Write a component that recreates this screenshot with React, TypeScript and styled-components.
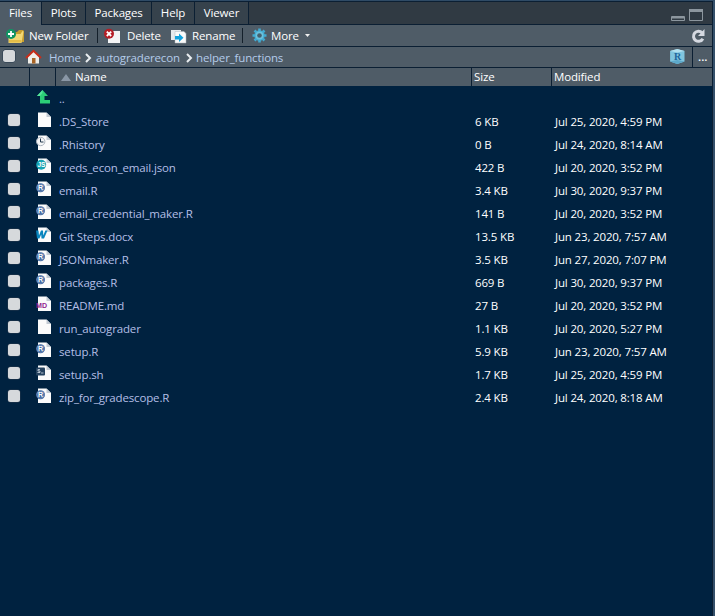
import React from 'react';
import styled, { createGlobalStyle } from 'styled-components';

const Global = createGlobalStyle`
  * { box-sizing: border-box; }
  body { margin: 0; background: #002240; overflow: hidden; }
  svg { display: block; flex: none; }
`;

const line = '#0b1f33';

const Pane = styled.div`
  width: 715px;
  height: 616px;
  display: flex;
  flex-direction: column;
  background: #002240;
  border-top: 1px solid #2f4b66;
  border-right: 2px solid #35506a;
  box-shadow: inset -1px 0 0 ${line};
  color: #fff;
  font: 11.5px/16px "Open Sans", "Noto Sans", sans-serif;
  letter-spacing: -0.15px;
  white-space: nowrap;
`;

const TabBar = styled.div`
  height: 24px;
  margin-right: 1px;
  display: flex;
  background: #303a43;
  border-top: 1px solid ${line};
  box-shadow: inset 0 -1px 0 ${line};
`;

const Tab = styled.div<{ $w: number; $active?: boolean }>`
  width: ${(p) => p.$w}px;
  height: ${(p) => (p.$active ? 23 : 22)}px;
  padding-top: 3px;
  text-align: center;
  background: ${(p) => (p.$active ? '#4f5c67' : '#36424c')};
  border-right: 1px solid ${line};
`;

const WindowButtons = styled.div`
  margin-left: auto;
  padding: 7px 8px 0 0;
`;

const Bar = styled.div<{ $h: number }>`
  height: ${(p) => p.$h}px;
  margin-right: 1px;
  display: flex;
  align-items: center;
  background: #4f5c67;
  border-bottom: 1px solid ${line};
`;

const Slot = styled.div<{ $w: number; $pad?: number; $lift?: number }>`
  width: ${(p) => p.$w}px;
  padding-left: ${(p) => p.$pad ?? 0}px;
  padding-bottom: ${(p) => p.$lift ?? 0}px;
  flex: none;
`;

const Label = styled.span<{ $w: number }>`
  width: ${(p) => p.$w}px;
  flex: none;
`;

const Divider = styled.div`
  width: 1px;
  height: 15px;
  background: #14202b;
  flex: none;
`;

const Crumb = styled(Label)`
  padding-top: 2px;
  color: #b4cbea;
`;

const Check = styled.span`
  display: block;
  width: 12px;
  height: 12px;
  border-radius: 2.5px;
  background: #d6d9dc;
  box-shadow: 0 0 0 0.5px #26394d;
`;

const Ellipsis = styled.div`
  width: 20px;
  height: 20px;
  margin-left: 7px;
  padding: 2px 0 0 5px;
  border-left: 1px solid ${line};
  letter-spacing: 0;
  font-weight: 600;
`;

const Push = styled.div<{ $right: number }>`
  margin-left: auto;
  padding-right: ${(p) => p.$right}px;
`;

const HeaderCell = styled.div<{ $w?: number; $pad: number }>`
  width: ${(p) => (p.$w ? `${p.$w}px` : 'auto')};
  height: 18px;
  flex: none;
  display: flex;
  align-items: center;
  gap: 4px;
  padding-left: ${(p) => p.$pad}px;
  border-right: ${(p) => (p.$w ? `1px solid ${line}` : '0')};
`;

const HeaderRow = styled(Bar)`
  border-bottom-color: #002240;
`;

const Row = styled.div`
  height: 23px;
  display: grid;
  grid-template-columns: 36px 23px 416px 80px 1fr;
`;

const BoxCell = styled.div`
  padding: 4px 0 0 8px;
`;

const IconCell = styled.div`
  padding-top: 1px;
`;

const Name = styled.div`
  padding-top: 4px;
  color: #b4bfe6;
`;

const Cell = styled.div`
  padding-top: 4px;
`;

const Listing = styled.div`
  display: flex;
  flex-direction: column;
`;

type Kind = 'up' | 'file' | 'hist' | 'js' | 'r' | 'doc' | 'md' | 'sh';

const Badge = styled.text`
  font-family: "Liberation Sans", sans-serif;
  font-weight: 700;
  letter-spacing: 0;
`;

const SerifBadge = styled(Badge)`
  font-family: "Liberation Serif", serif;
`;

const FileIcon = ({ kind }: { kind: Kind }) => {
  if (kind === 'up')
    return (
      <svg width="16" height="17" viewBox="0 0 16 17">
        <path d="M6.5 2 1 8h3v7.5h10V12H8.5V8H12z" fill="#2cce77" />
        <path d="M6.5 2 1 8h3l2.5-3z" fill="#55e39b" />
      </svg>
    );
  return (
    <svg width="16" height="17" viewBox="0 0 16 17">
      <path d="M2 1.5h8.5L15 6v10H2z" fill="#fbfbfb" />
      <path d="M10.5 1.5V6H15z" fill="#c2cad3" />
      {kind === 'hist' && (
        <>
          <circle cx="4.7" cy="7.5" r="4.2" fill="#f5f6f7" stroke="#aab3bd" />
          <path d="M4.5 4.5V8h3" fill="none" stroke="#23394d" />
        </>
      )}
      {kind === 'js' && (
        <>
          <circle cx="5.2" cy="7.8" r="5" fill="#16a4b5" />
          <Badge x="1.4" y="10.2" fontSize="6.5" fill="#fff">JS</Badge>
        </>
      )}
      {kind === 'r' && (
        <>
          <circle cx="4.5" cy="7.7" r="4.5" fill="#3e659d" />
          <circle cx="4.5" cy="7.7" r="3.6" fill="none" stroke="#7f9cc5" strokeWidth=".7" />
          <Badge x="2.1" y="10.3" fontSize="7" fill="#fff">R</Badge>
        </>
      )}
      {kind === 'doc' && (
        <path d="M0 4.5h2.5l.5 5 2-5h2l.3 5 2-5h2.2L8 12.5H5.5l-.3-4-1.8 4H1z" fill="#0784bd" />
      )}
      {kind === 'md' && (
        <Badge x="0" y="13" fontSize="7.5" textLength="11" lengthAdjust="spacingAndGlyphs" fill="#92278f">MD</Badge>
      )}
      {kind === 'sh' && (
        <>
          <rect y="3.5" width="9" height="8" rx="1" fill="#25425f" />
          <path d="M4 5.5H2V7h2v1.500H1.500M5 9h2.500" fill="none" stroke="#d5dfe8" strokeWidth=".8" />
        </>
      )}
    </svg>
  );
};

const NewFolderIcon = () => (
  <svg width="19" height="16" viewBox="0 0 19 16">
    <path d="M3 5l8-1 2-2h4l1 1v11H3z" fill="#c79e2e" />
    <path d="M2.5 6h12l2-3 1 .5-2 11.5H2.5z" fill="#f2d875" />
    <path d="M3 12h12.5v2.5H3z" fill="#e4bd48" />
    <circle cx="5" cy="6" r="5" fill="#119563" />
    <path d="M5 3v6M2 6h6" stroke="#fff" strokeWidth="1.8" />
  </svg>
);

const DeleteIcon = () => (
  <svg width="17" height="16" viewBox="0 0 17 16">
    <path d="M4 3h12v12H4z" fill="#f3f4f5" />
    <circle cx="5" cy="5.8" r="5" fill="#b51d25" />
    <path d="M2.8 3.6l4.4 4.4M7.2 3.6L2.8 8" stroke="#fff" strokeWidth="1.8" />
  </svg>
);

const RenameIcon = () => (
  <svg width="17" height="16" viewBox="0 0 17 16">
    <path d="M1 2h10v10H1z" fill="#e6eaed" />
    <path d="M5 3.5h9l2 2V15H5z" fill="#fafafa" stroke="#aeb7be" strokeWidth=".5" />
    <path d="M5 8h4V5.500L13.500 9.700 9 14v-2.500H5z" fill="#13a3de" />
  </svg>
);

const GearIcon = () => (
  <svg width="15" height="15" viewBox="0 0 15 15">
    <g stroke="#43abd1" strokeWidth="2.6">
      <path d="M7.5 .5v14M.5 7.5h14M2.5 2.5l10 10M12.5 2.5l-10 10" />
    </g>
    <circle cx="7.5" cy="7.5" r="5.2" fill="#43abd1" />
    <circle cx="7.5" cy="7.5" r="3.9" fill="#6bc2de" />
    <circle cx="7.5" cy="7.5" r="2.3" fill="#45606e" />
  </svg>
);

const HomeIcon = () => (
  <svg width="17" height="16" viewBox="0 0 17 16">
    <path d="M3 7l5.5-5L14 7v7.5H3z" fill="#f0eee9" />
    <path d="M7 9h3.5v5.5H7z" fill="#a86425" />
    <path d="M1 9l7.5-7.2L16 9" fill="none" stroke="#c82d19" strokeWidth="2" />
  </svg>
);

const Chevron = () => (
  <svg width="8" height="12" viewBox="0 0 8 12">
    <path d="M1 3l4 4-4 4" fill="none" stroke="#e9edf0" strokeWidth="2" />
  </svg>
);

const RefreshIcon = () => (
  <svg width="16" height="16" viewBox="0 0 16 16">
    <path d="M12.1 4.8A5 5 0 1 0 12.9 10.7" fill="none" stroke="#d5d9e1" strokeWidth="3" />
    <path d="M14.5 1v7H8z" fill="#d5d9e1" />
  </svg>
);

const ProjectIcon = () => (
  <svg width="16" height="16" viewBox="0 0 16 16">
    <path d="M8.300 0l7.200 2v10.500L8.300 15 1.100 12.500V2z" fill="#80c5df" />
    <path d="M8.300 0l7.200 2-7.200 1.500L1.100 2z" fill="#b4e0ef" />
    <path d="M8.300 15l7.200-2.500-7.200-1.500-7.200 1.500z" fill="#5ca8ca" />
    <SerifBadge x="5" y="10.500" fontSize="10" fill="#1f659c">R</SerifBadge>
  </svg>
);

const files: [Kind, string, string, string][] = [
  ['file', '.DS_Store', '6 KB', 'Jul 25, 2020, 4:59 PM'],
  ['hist', '.Rhistory', '0 B', 'Jul 24, 2020, 8:14 AM'],
  ['js', 'creds_econ_email.json', '422 B', 'Jul 20, 2020, 3:52 PM'],
  ['r', 'email.R', '3.4 KB', 'Jul 30, 2020, 9:37 PM'],
  ['r', 'email_credential_maker.R', '141 B', 'Jul 20, 2020, 3:52 PM'],
  ['doc', 'Git Steps.docx', '13.5 KB', 'Jun 23, 2020, 7:57 AM'],
  ['r', 'JSONmaker.R', '3.5 KB', 'Jun 27, 2020, 7:07 PM'],
  ['r', 'packages.R', '669 B', 'Jul 30, 2020, 9:37 PM'],
  ['md', 'README.md', '27 B', 'Jul 20, 2020, 3:52 PM'],
  ['file', 'run_autograder', '1.1 KB', 'Jul 20, 2020, 5:27 PM'],
  ['r', 'setup.R', '5.9 KB', 'Jun 23, 2020, 7:57 AM'],
  ['sh', 'setup.sh', '1.7 KB', 'Jul 25, 2020, 4:59 PM'],
  ['r', 'zip_for_gradescope.R', '2.4 KB', 'Jul 24, 2020, 8:18 AM'],
];

export default function App() {
  return (
    <>
      <Global />
      <Pane>
        <TabBar>
          <Tab $w={42} $active>Files</Tab>
          <Tab $w={44}>Plots</Tab>
          <Tab $w={66}>Packages</Tab>
          <Tab $w={43}>Help</Tab>
          <Tab $w={54}>Viewer</Tab>
          <WindowButtons>
            <svg width="33" height="14" viewBox="0 0 33 14">
              <path d="M.5 7.5h13v4H.5z" fill="none" stroke="#8c969e" />
              <path d="M1 8h12v1.5H1z" fill="#8c969e" />
              <path d="M18.5 .5h13v11h-13z" fill="none" stroke="#8c969e" />
              <path d="M18 0h14v3H18z" fill="#8c969e" />
            </svg>
          </WindowButtons>
        </TabBar>
        <Bar $h={22}>
          <Slot $w={29} $pad={6}><NewFolderIcon /></Slot>
          <Label $w={68}>New Folder</Label>
          <Divider />
          <Slot $w={29} $pad={6}><DeleteIcon /></Slot>
          <Label $w={43}>Delete</Label>
          <Slot $w={22}><RenameIcon /></Slot>
          <Label $w={50}>Rename</Label>
          <Divider />
          <Slot $w={28} $pad={9}><GearIcon /></Slot>
          <Label $w={34}>More</Label>
          <svg width="5" height="3" viewBox="0 0 5 3"><path d="M0 0h5L2.5 3z" fill="#f0f0f0" /></svg>
          <Push $right={6}><RefreshIcon /></Push>
        </Bar>
        <Bar $h={21}>
          <Slot $w={25} $pad={2.5} $lift={2}><Check /></Slot>
          <Slot $w={24}><HomeIcon /></Slot>
          <Crumb $w={36}>Home</Crumb>
          <Slot $w={11}><Chevron /></Slot>
          <Crumb $w={90}>autograderecon</Crumb>
          <Slot $w={10}><Chevron /></Slot>
          <Crumb $w={90}>helper_functions</Crumb>
          <Push $right={0}><ProjectIcon /></Push>
          <Ellipsis>...</Ellipsis>
        </Bar>
        <HeaderRow $h={19}>
          <HeaderCell $w={30} $pad={0} />
          <HeaderCell $w={26} $pad={0} />
          <HeaderCell $w={416} $pad={5}>
            <svg width="10" height="7" viewBox="0 0 10 7"><path d="M5 0l5 7H0z" fill="#8a97a6" /></svg>
            Name
          </HeaderCell>
          <HeaderCell $w={80} $pad={2}>Size</HeaderCell>
          <HeaderCell $pad={2}>Modified</HeaderCell>
        </HeaderRow>
        <Listing>
          <Row>
            <BoxCell />
            <IconCell><FileIcon kind="up" /></IconCell>
            <Name>..</Name>
          </Row>
          {files.map(([kind, name, size, date]) => (
            <Row key={name}>
              <BoxCell><Check /></BoxCell>
              <IconCell><FileIcon kind={kind} /></IconCell>
              <Name>{name}</Name>
              <Cell>{size}</Cell>
              <Cell>{date}</Cell>
            </Row>
          ))}
        </Listing>
      </Pane>
    </>
  );
}
